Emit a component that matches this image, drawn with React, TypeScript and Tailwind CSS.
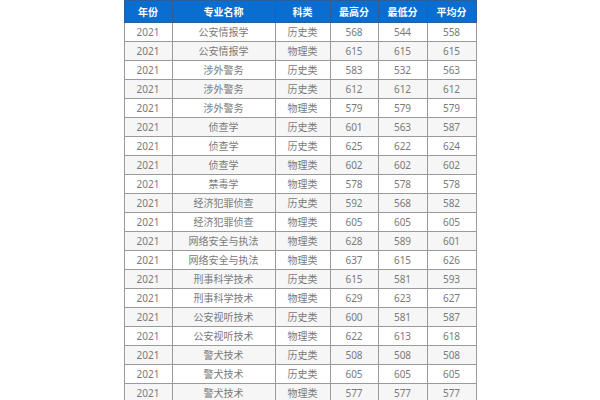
import React from "react";

const rows: [string, string, string, string, string, string][] = [
  ["2021", "公安情报学", "历史类", "568", "544", "558"],
  ["2021", "公安情报学", "物理类", "615", "615", "615"],
  ["2021", "涉外警务", "历史类", "583", "532", "563"],
  ["2021", "涉外警务", "历史类", "612", "612", "612"],
  ["2021", "涉外警务", "物理类", "579", "579", "579"],
  ["2021", "侦查学", "历史类", "601", "563", "587"],
  ["2021", "侦查学", "历史类", "625", "622", "624"],
  ["2021", "侦查学", "物理类", "602", "602", "602"],
  ["2021", "禁毒学", "物理类", "578", "578", "578"],
  ["2021", "经济犯罪侦查", "历史类", "592", "568", "582"],
  ["2021", "经济犯罪侦查", "物理类", "605", "605", "605"],
  ["2021", "网络安全与执法", "物理类", "628", "589", "601"],
  ["2021", "网络安全与执法", "物理类", "637", "615", "626"],
  ["2021", "刑事科学技术", "历史类", "615", "581", "593"],
  ["2021", "刑事科学技术", "物理类", "629", "623", "627"],
  ["2021", "公安视听技术", "历史类", "600", "581", "587"],
  ["2021", "公安视听技术", "物理类", "622", "613", "618"],
  ["2021", "警犬技术", "历史类", "508", "508", "508"],
  ["2021", "警犬技术", "历史类", "605", "605", "605"],
  ["2021", "警犬技术", "物理类", "577", "577", "577"],
];

const headers = ["年份", "专业名称", "科类", "最高分", "最低分", "平均分"];
const widths = ["w-[48px]", "w-[103px]", "w-[55px]", "w-[48px]", "w-[49px]", "w-[49px]"];

export default function App() {
  return (
    <div
      className="w-[600px] h-[400px] bg-white flex justify-center overflow-hidden"
      style={{ fontFamily: '"Noto Sans", "Noto Sans CJK SC", sans-serif' }}
    >
      <table className="w-[352px] table-fixed border-collapse self-start">
        <thead>
          <tr className="h-[22px] bg-[#0a6ed1]">
            {headers.map((h, i) => (
              <th
                key={h}
                className={`${widths[i]} border border-[#2c5f9a] text-white text-[10px] font-bold leading-none text-center p-0`}
              >
                {h}
              </th>
            ))}
          </tr>
        </thead>
        <tbody>
          {rows.map((r, ri) => (
            <tr key={ri} className={`h-[19px] ${ri % 2 === 1 ? "bg-[#f6f6f6]" : "bg-white"}`}>
              {r.map((c, ci) => (
                <td
                  key={ci}
                  className="border border-[#9a9a9a] text-[#7a7a7a] text-[10px] leading-none text-center p-0"
                >
                  {c}
                </td>
              ))}
            </tr>
          ))}
        </tbody>
      </table>
    </div>
  );
}
